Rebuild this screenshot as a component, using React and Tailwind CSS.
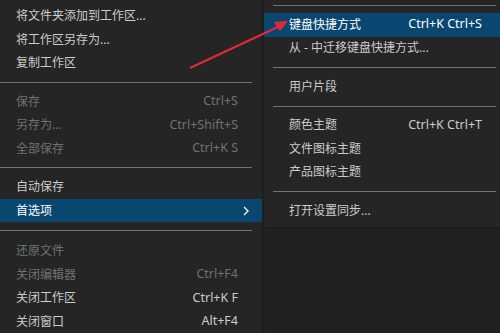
const leftItems = [
  { label: "将文件夹添加到工作区..." },
  { label: "将工作区另存为..." },
  { label: "复制工作区" },
  { sep: true },
  { label: "保存", key: "Ctrl+S", disabled: true },
  { label: "另存为...", key: "Ctrl+Shift+S", disabled: true },
  { label: "全部保存", key: "Ctrl+K S", disabled: true },
  { sep: true },
  { label: "自动保存" },
  { label: "首选项", sub: true, active: true },
  { sep: true, tall: true },
  { label: "还原文件", disabled: true },
  { label: "关闭编辑器", key: "Ctrl+F4", disabled: true },
  { label: "关闭工作区", key: "Ctrl+K F" },
  { label: "关闭窗口", key: "Alt+F4" },
];

const subItems = [
  { label: "键盘快捷方式", key: "Ctrl+K Ctrl+S", active: true },
  { label: "从 - 中迁移键盘快捷方式..." },
  { sep: true },
  { label: "用户片段" },
  { sep: true },
  { label: "颜色主题", key: "Ctrl+K Ctrl+T" },
  { label: "文件图标主题" },
  { label: "产品图标主题" },
  { sep: true },
  { label: "打开设置同步..." },
];

function Separator({ tall }) {
  return (
    <div className={`flex items-center pl-[9px] pr-[10px] ${tall ? "h-[17px]" : "h-[15px]"}`}>
      <div className="h-px w-full bg-[#727272]" />
    </div>
  );
}

function Item({ item }) {
  const color = item.active
    ? "bg-[#094771] text-white"
    : item.disabled
      ? "text-[#717171]"
      : "text-[#cccccc]";
  return (
    <div className={`relative flex h-[23.5px] items-center justify-between pl-[25px] pr-[24px] ${color}`}>
      <span>{item.label}</span>
      {item.key && <span className="text-[12.5px]">{item.key}</span>}
      {item.sub && (
        <svg className="absolute right-[13px] top-[7px]" width="6" height="10" viewBox="0 0 6 10">
          <path d="M1 1 L5 5 L1 9" fill="none" stroke="currentColor" strokeWidth="1.3" />
        </svg>
      )}
    </div>
  );
}

function Menu({ items }) {
  return items.map((it, i) => (it.sep ? <Separator key={i} tall={it.tall} /> : <Item key={i} item={it} />));
}

export default function App() {
  return (
    <div
      className="relative flex h-[333px] w-[500px] overflow-hidden bg-[#1f1f1f] text-[12px]"
      style={{ fontFamily: '"Noto Sans", "Noto Sans CJK SC", sans-serif' }}
    >
      <div className="-ml-[9px] h-full w-[271px] shrink-0 bg-[#252526] pt-[4.25px]">
        <Menu items={leftItems} />
      </div>
      <div className="w-[2px] shrink-0 bg-[#1e1e1e]" />
      <div className="flex h-full w-[242px] shrink-0 flex-col">
        <div className="h-[227px] bg-[#252526]">
          <div className="flex h-[13px] pl-[9px] pr-[10px] pt-[5px]">
            <div className="h-px w-full bg-[#727272]" />
          </div>
          <Menu items={subItems} />
        </div>
        <div className="flex-1 border-t border-[#1a1a1a] bg-[#202020] pl-[7px]">
          <div className="h-full border-l border-[#242424]" />
        </div>
      </div>
      <svg className="pointer-events-none absolute left-0 top-0" width="500" height="333">
        <line x1="190" y1="68" x2="280" y2="26" stroke="#e3283a" strokeWidth="2.2" />
        <polygon points="288,21 274,22 280,31" fill="#e3283a" />
      </svg>
    </div>
  );
}
